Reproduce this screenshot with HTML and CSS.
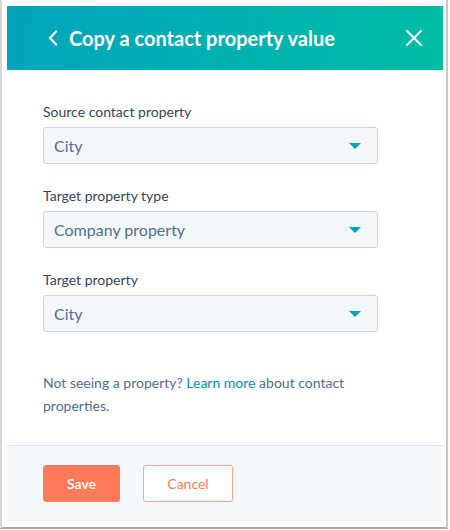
FILE: index.html
```html
<!DOCTYPE html>
<html>
<head>
<meta charset="utf-8">
<link rel="stylesheet" href="styles.css">
</head>
<body>
<div class="frame">
  <div class="panel">
    <div class="header">
      <div class="title-wrap">
        <svg class="back" width="10" height="16" viewBox="0 0 10 16"><path d="M8 1.5 L2 8 L8 14.5" fill="none" stroke="#fff" stroke-width="2.2" stroke-linecap="round" stroke-linejoin="round"/></svg>
        <h1 class="title">Copy a contact property value</h1>
      </div>
      <svg class="close" width="16" height="16" viewBox="0 0 16 16"><path d="M1 1 L15 15 M15 1 L1 15" fill="none" stroke="#fff" stroke-width="2" stroke-linecap="round"/></svg>
    </div>
    <div class="body">
      <div class="field">
        <div class="label">Source contact property</div>
        <div class="select"><span>City</span><span class="caret"></span></div>
      </div>
      <div class="field">
        <div class="label">Target property type</div>
        <div class="select"><span>Company property</span><span class="caret"></span></div>
      </div>
      <div class="field">
        <div class="label">Target property</div>
        <div class="select"><span>City</span><span class="caret"></span></div>
      </div>
      <p class="help">Not seeing a property? <span class="link">Learn more</span> about contact<br>properties.</p>
    </div>
    <div class="footer">
      <button class="btn btn-primary">Save</button>
      <button class="btn btn-secondary">Cancel</button>
    </div>
  </div>
</div>
</body>
</html>
```
FILE: styles.css
```css
* { box-sizing: border-box; }
html, body { margin: 0; padding: 0; background: #fff; }
body { font-family: Lato, "Open Sans", sans-serif; color: #33475b; }
.frame {
  width: 448px;
  height: 529px;
  border-left: 2px solid #d6d6d6;
  border-right: 2px solid #c8c8c8;
  border-bottom: 2px solid #a8a8a8;
  padding: 6px 3px 0 5px;
}
.panel { width: 436px; }
.header {
  height: 64px;
  background: linear-gradient(100deg, #00a4bd 0%, #00bda5 100%);
  display: flex;
  align-items: center;
  justify-content: space-between;
  padding: 0 21px 0 41px;
}
.title-wrap { display: flex; align-items: center; gap: 11px; }
.back { display: block; }
.title {
  margin: 0;
  color: #fff;
  font-size: 20px;
  font-weight: 700;
  line-height: 26px;
}
.close { display: block; }
.body {
  padding: 32px 65px 28px 36px;
  border-bottom: 1px solid #dfe3eb;
}
.field { margin-bottom: 22px; }
.label {
  font-size: 14px;
  line-height: 20px;
  margin-bottom: 5px;
  color: #33475b;
}
.select {
  height: 37px;
  background: #f5f8fa;
  border: 1px solid #cbd6e2;
  border-radius: 3px;
  display: flex;
  align-items: center;
  justify-content: space-between;
  padding: 0 16px 0 10px;
  font-size: 16px;
  color: #516f90;
}
.caret {
  width: 0; height: 0;
  border-left: 6px solid transparent;
  border-right: 6px solid transparent;
  border-top: 6px solid #00a4bd;
}
.help {
  margin: 39px 0 0 0;
  font-size: 14px;
  line-height: 23px;
  color: #516f90;
}
.link { color: #0091ae; }
.footer {
  background: #f5f8fa;
  padding: 19px 36px 20px;
  display: flex;
  gap: 23px;
}
.btn {
  height: 37px;
  border-radius: 3px;
  font-family: Lato, "Open Sans", sans-serif;
  font-size: 14px;
  font-weight: 600;
  padding: 0;
}
.btn-primary {
  width: 77px;
  background: #ff7a59;
  border: 1px solid #ff7a59;
  color: #fff;
}
.btn-secondary {
  width: 90px;
  background: #fff;
  border: 1px solid #ffa68f;
  color: #ff7a59;
  font-weight: 400;
}
```
